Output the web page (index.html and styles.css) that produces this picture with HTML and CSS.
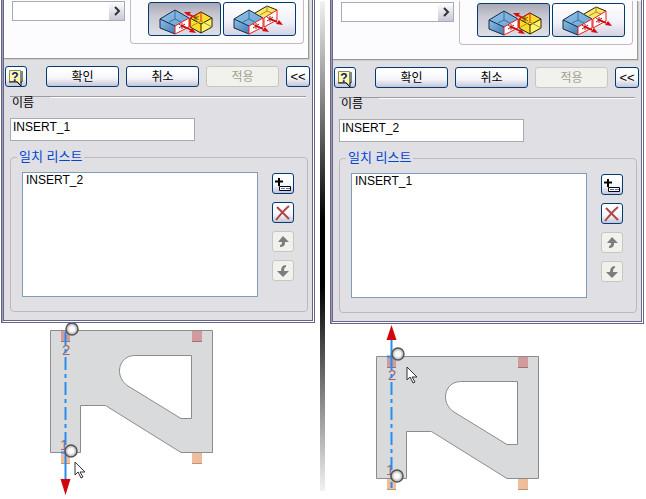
FILE: index.html
```html
<!DOCTYPE html>
<html lang="ko">
<head>
<meta charset="utf-8">
<title>INSERT</title>
<link rel="stylesheet" href="styles.css">
</head>
<body>
<svg class="defs" aria-hidden="true">
  <defs>
    <linearGradient id="blueTop" x1="0" y1="0" x2="1" y2="1"><stop offset="0" stop-color="#8fbfe6"/><stop offset="1" stop-color="#6aa6d8"/></linearGradient>
    <linearGradient id="blueSide" x1="0" y1="0" x2="1" y2="1"><stop offset="0" stop-color="#8fbfe6"/><stop offset="1" stop-color="#3f7cb4"/></linearGradient>
    <radialGradient id="ball"><stop offset="0" stop-color="#fff"/><stop offset=".55" stop-color="#e4e4e4"/><stop offset="1" stop-color="#a8a8a8"/></radialGradient>
    <linearGradient id="peg"><stop offset="0" stop-color="#f0bd9a"/><stop offset=".5" stop-color="#ffd9be"/><stop offset="1" stop-color="#eebb98"/></linearGradient>
    <g id="blueBox">
      <path d="M1 13 16 4l14 8-14 8z" fill="url(#blueTop)"/>
      <path d="M1 13l15 7v8L1 22z" fill="url(#blueSide)"/>
      <path d="M16 20l14-8v9l-14 7z" fill="#fff"/>
      <path d="M16 4v9M16 13l-6 3M16 13l6 3" fill="none" stroke="#3d6f9c"/>
      <path d="M16 20 1 13 16 4l14 8M1 13v9l15 6" fill="none" stroke="#142c44"/>
      <path d="M16 20l14-8v9l-14 7z" fill="none" stroke="#f01818"/>
    </g>
    <path id="star" d="M0-3v6M-3-2 3 2M-3 2 3-2" fill="none" stroke="#b00c0c"/>
    <g id="mateOpposed">
      <path d="M31 12 42 6l11 6v9l-11 6-11-6z" fill="#fbdc2c"/>
      <path d="M42 18l11-6v9l-11 6z" fill="#fff36a"/>
      <path d="M31 12 42 6l11 6v9l-11 6-11-6zM31 12l11 6 11-6M42 18v9" fill="none" stroke="#2b2603"/>
      <path d="M31 21l11-6 11 6" fill="none" stroke="#a8921a"/>
      <use href="#blueBox"/>
      <path d="M31 21v-9l11-6v9" fill="none" stroke="#f01818"/>
      <path d="M24 20l8 4M37 12 29 8" stroke="#d60c12" stroke-width="1.500"/>
      <path d="M37 27l-7-1 3-4zM25 6l7 0-3 4z" fill="#d60c12"/>
      <use href="#star" x="23" y="20"/><path d="M37 9v6M34 10l6 4M34 14l6-4" fill="none" stroke="#7a5a08"/>
    </g>
    <g id="mateAligned">
      <path d="M22 7 34 0l10 4-13 8z" fill="#fbe76a"/>
      <path d="M22 7 34 0l10 4" fill="none" stroke="#2b2603"/>
      <path d="M34 0v5l-7 4M34 5l5 2" fill="none" stroke="#a8921a"/>
      <use href="#blueBox"/>
      <path d="M31 12l13-8v10l-13 7z" fill="#fff" stroke="#f01818"/>
      <path d="M24 20l6 3M38 13l6 3" stroke="#d60c12" stroke-width="1.500"/>
      <path d="M36 26l-7-1 3-4zM50 19l-7-1 3-4z" fill="#d60c12"/>
      <use href="#star" x="23" y="20"/><use href="#star" x="37" y="13"/>
    </g>
    <g id="help">
      <path d="M2.500 2.500h11v12l-1 1-2-2h-8z" fill="#fffca8" stroke="#8a8a60"/>
      <path d="M2 14h8l4 4v-4h1V3" fill="none" stroke="#111"/>
      <text class="mark" x="8" y="13">?</text>
    </g>
    <g id="add"><path d="M2 7.500h8M6 4v8" stroke="#000" stroke-width="2"/><path d="M6.500 12.500h11v4h-11z" fill="#fff" stroke="#000"/><path d="M8 14.500h4m1 0h4" stroke="#3376d8"/></g>
    <path id="remove" d="M4 4l12 12M16 3C11 7 7 12 3 17" fill="none" stroke="#b04747" stroke-width="2"/>
    <path id="up" d="M10 4l6 6h-4v1q0 4-5 4v-2q2 0 2-3H5z" fill="#7d7d7d"/>
    <path id="down" d="M13 4v2q-2 0-2 4h5l-6 6-6-6h4q0-6 5-6z" fill="#7d7d7d"/>
    <g id="part">
      <path d="M50.500 330.500H212.500V452.500H181L105.500 405.500H80.500V452.500H50.500zM134.500 355.500H191.500V418.500H181L128 386C114 377 118 356 134.500 355.500z" fill="#d9dadb" fill-rule="evenodd" stroke="#8c8c8c"/>
      <path d="M61 331h9v10h-9zM192 331h10v10h-10z" fill="#d19a9d"/>
      <path d="M61 341.500h9M192 341.500h10" stroke="#a07072"/>
      <path d="M61 453h9v10h-9zM192 453h10v10h-10z" fill="url(#peg)"/>
      <path d="M61 463.500h9M192 463.500h10" stroke="#bd9279"/>
    </g>
    <path id="cursor" d="M0 0v13l3-3 3 6 2-1-3-5h5z" fill="#fff" stroke="#333"/>
    <g id="node"><circle r="6" fill="url(#ball)" stroke="#555" stroke-width="1.500"/><circle r="3" fill="#fff" opacity=".7"/></g>
  </defs>
</svg>
<main class="compare">
  <section class="side">
    <form class="dialog">
      <div class="page">
        <div class="picker"><input type="text" aria-label="값"><button type="button" aria-label="더 보기"><svg width="8" height="10"><path d="M2 1l4 4-4 4" /></svg></button></div>
        <div class="modes">
          <button type="button" class="btn mode pressed" aria-label="반대"><svg width="56" height="32" viewBox="0 -3 56 32"><use href="#mateOpposed"/></svg></button>
          <button type="button" class="btn mode" aria-label="정렬"><svg width="56" height="32" viewBox="0 -3 56 32"><use href="#mateAligned"/></svg></button>
        </div>
      </div>
      <div class="actions">
        <button type="button" class="btn small" aria-label="도움말"><svg width="18" height="18"><use href="#help"/></svg></button>
        <button type="button" class="btn wide">확인</button>
        <button type="button" class="btn wide">취소</button>
        <button type="button" class="btn wide" disabled>적용</button>
        <button type="button" class="btn less">&lt;&lt;</button>
      </div>
      <div class="name">
        <label for="name1">이름</label>
        <input id="name1" type="text" value="INSERT_1">
      </div>
      <fieldset class="matches">
        <legend>일치 리스트</legend>
        <select size="6" aria-label="일치 리스트"><option>INSERT_2</option></select>
        <div class="tools">
          <button type="button" class="btn small" aria-label="추가"><svg width="20" height="20"><use href="#add"/></svg></button>
          <button type="button" class="btn small" aria-label="삭제"><svg width="20" height="20"><use href="#remove"/></svg></button>
          <button type="button" class="btn small" aria-label="위로" disabled><svg width="20" height="20"><use href="#up"/></svg></button>
          <button type="button" class="btn small" aria-label="아래로" disabled><svg width="20" height="20"><use href="#down"/></svg></button>
        </div>
      </fieldset>
    </form>
    <svg class="drawing" width="314" height="176" viewBox="1 323 314 176">
      <use href="#part"/>
      <text x="62" y="355">2</text><text x="60" y="450">1</text>
      <path class="axis" d="M65.500 332V453"/>
      <path class="lead" d="M61 452.500h5M65.500 453v28"/>
      <path class="tip" d="M60.500 479h10l-5 16z"/>
      <use href="#node" x="72" y="329"/><use href="#node" x="71" y="451"/>
      <use href="#cursor" x="75" y="462"/>
    </svg>
  </section>
  <div class="divider"></div>
  <section class="side">
    <form class="dialog lower">
      <div class="page">
        <div class="picker"><input type="text" aria-label="값"><button type="button" aria-label="더 보기"><svg width="8" height="10"><path d="M2 1l4 4-4 4" /></svg></button></div>
        <div class="modes">
          <button type="button" class="btn mode pressed" aria-label="반대"><svg width="56" height="32" viewBox="0 -3 56 32"><use href="#mateOpposed"/></svg></button>
          <button type="button" class="btn mode" aria-label="정렬"><svg width="56" height="32" viewBox="0 -3 56 32"><use href="#mateAligned"/></svg></button>
        </div>
      </div>
      <div class="actions">
        <button type="button" class="btn small" aria-label="도움말"><svg width="18" height="18"><use href="#help"/></svg></button>
        <button type="button" class="btn wide">확인</button>
        <button type="button" class="btn wide">취소</button>
        <button type="button" class="btn wide" disabled>적용</button>
        <button type="button" class="btn less">&lt;&lt;</button>
      </div>
      <div class="name">
        <label for="name2">이름</label>
        <input id="name2" type="text" value="INSERT_2">
      </div>
      <fieldset class="matches">
        <legend>일치 리스트</legend>
        <select size="6" aria-label="일치 리스트"><option>INSERT_1</option></select>
        <div class="tools">
          <button type="button" class="btn small" aria-label="추가"><svg width="20" height="20"><use href="#add"/></svg></button>
          <button type="button" class="btn small" aria-label="삭제"><svg width="20" height="20"><use href="#remove"/></svg></button>
          <button type="button" class="btn small" aria-label="위로" disabled><svg width="20" height="20"><use href="#up"/></svg></button>
          <button type="button" class="btn small" aria-label="아래로" disabled><svg width="20" height="20"><use href="#down"/></svg></button>
        </div>
      </fieldset>
    </form>
    <svg class="drawing" width="314" height="175" viewBox="330 324 314 175">
      <use href="#part" x="326" y="26"/>
      <text x="388" y="380">2</text><text x="386" y="475">1</text>
      <path class="axis" d="M391.500 357V488"/>
      <path class="lead" d="M387 356.500h5M391.500 340v16"/>
      <path class="tip" d="M386.500 340h10l-5-15z"/>
      <use href="#node" x="398" y="354"/><use href="#node" x="397" y="476"/>
      <use href="#cursor" x="407" y="367"/>
    </svg>
  </section>
</main>
</body>
</html>
```
FILE: styles.css
```css
* { box-sizing: border-box; }
body { margin: 0; background: #fff; font: 12px/16px "Liberation Sans", "Noto Sans CJK KR", sans-serif; color: #000; }
.defs { position: absolute; width: 0; height: 0; }
svg { display: block; }
.compare { display: grid; grid-template-columns: 1fr 5px 1fr; column-gap: 5px; padding: 0 2px 0 1px; }
.divider { margin: 1px 0 8px; background: linear-gradient(#f2f2f2, #000 45%, #000 58%, #f2f2f2); }
.dialog { margin: 0; padding: 0 2px 2px; border: 1px solid #66668a; border-top: 0; background: #e0dfe4; box-shadow: inset 1px 0 #9a9cb8, inset -1px -1px #fff, inset 2px 0 #66668a, inset -2px -2px #66668a; }
.lower { padding-top: 1px; background: linear-gradient(#fcfcfe 1px, #e0dfe4 1px); }
.page { display: flex; gap: 5px; height: 59px; margin-right: 3px; border: solid #919b9c; border-width: 0 1px 1px 0; background: #fcfcfe; box-shadow: 1px 1px #d0cebf; }
.picker { display: flex; width: 113px; height: 20px; margin: 1px 0 0 8px; border: 1px solid #a5acb2; background: #fff; }
.picker input { flex: 1; min-width: 0; padding: 0; border: 0; background: none; }
.picker button { display: grid; place-items: center; width: 15px; padding: 0; border: 0; background: linear-gradient(#fff, #c7c7d8); }
.picker path { fill: none; stroke: #333; stroke-width: 2; }
.modes { display: flex; gap: 2px; flex: 1; height: 44px; margin-right: 4px; padding: 2px 0 0 17px; border: 1px solid #c1bbc2; border-top: 0; border-radius: 0 0 4px 4px; }
.btn { display: flex; align-items: center; justify-content: center; height: 21px; padding: 0; border: 1px solid #003c74; border-radius: 3px; background: linear-gradient(#fff 20%, #f4f4fa 60%, #c6c5d7); color: #000; font: inherit; }
.btn:disabled { border-color: #c9c7ba; background: #f1f1ed; color: #a1a192; }
.mode { justify-content: flex-start; width: 73px; height: 34px; padding-left: 9px; background: linear-gradient(#fff, #f0f0f8 60%, #d2d2e2); }
.pressed { padding-left: 10px; background: linear-gradient(#a9a9b7, #c9c9d4 40%, #dedee6); }
.small { width: 22px; }
.wide { width: 73px; }
.less { width: 24px; font-size: 13px; }
.actions { display: flex; justify-content: space-between; padding: 7px 2px 0 1px; }
.actions .small { margin-right: 12px; }
.mark { font: bold 12px "Liberation Sans", sans-serif; fill: #11118c; text-anchor: middle; }
.name { display: flex; flex-direction: column; align-items: flex-start; margin: 9px 6px 0; border-top: 1px solid #9d9da1; box-shadow: inset 0 1px #fff; }
.name label { height: 21px; padding: 0 16px 0 2px; background: #e0dfe4; line-height: 13px; }
.name input { width: 185px; height: 23px; padding: 0 2px 6px; border: 1px solid #a5acb2; background: #fff; font: inherit; }
.matches { display: flex; gap: 14px; margin: 8px 4px 8px 6px; padding: 7px 13px 14px 11px; border: 1px solid #bfb8bf; border-radius: 4px; }
.matches legend { padding: 0 2px; margin-left: -5px; color: #0046d5; font-size: 13px; line-height: 16px; }
.matches select { flex: 1; min-width: 0; height: 125px; padding: 0; border: 1px solid #7f9db9; border-radius: 0; background: #fff; font: inherit; overflow: hidden; }
.matches option { padding: 0 3px; line-height: 16px; }
.tools { display: flex; flex-direction: column; gap: 8px; padding-top: 1px; }
.drawing text { font: 15px "Liberation Sans", sans-serif; fill: #a06468; }
.drawing .axis { stroke: #2a8cf0; stroke-width: 2; stroke-dasharray: 13 4 4 4; fill: none; }
.drawing .lead { stroke: #2a8cf0; stroke-width: 2; fill: none; }
.drawing .tip { fill: #d0060c; }
```
